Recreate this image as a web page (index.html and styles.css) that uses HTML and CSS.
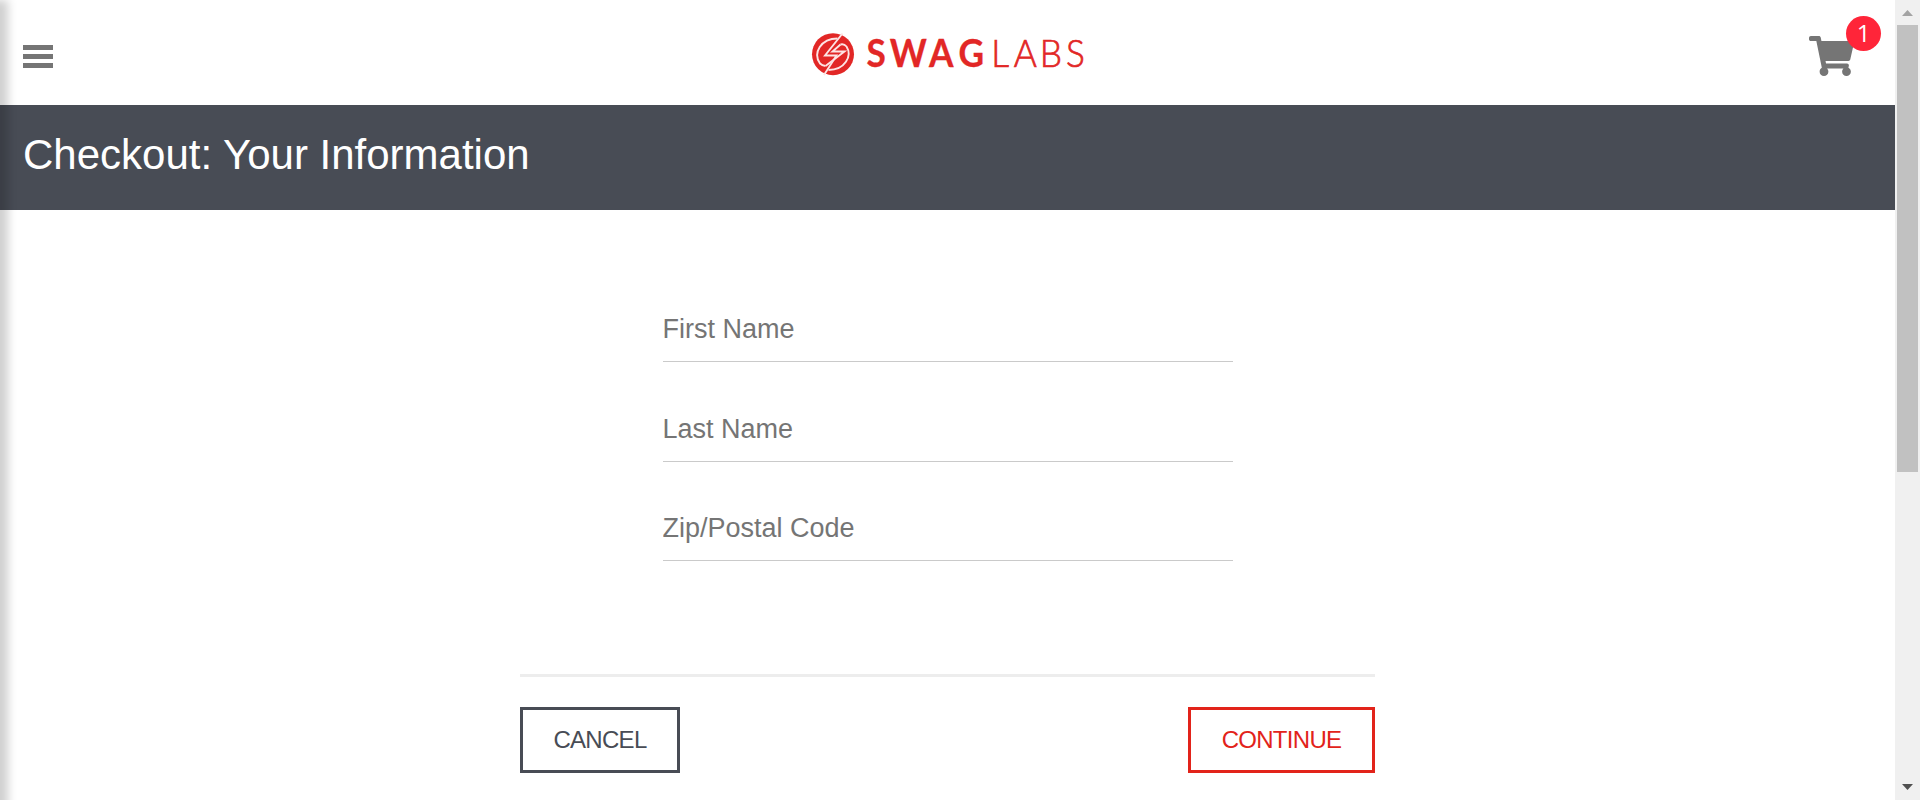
FILE: index.html
```html
<!DOCTYPE html>
<html lang="en">
<head>
<meta charset="utf-8">
<title>Swag Labs</title>
<link rel="stylesheet" href="styles.css">
</head>
<body>
<div class="viewport">
  <div class="page">
    <div class="menu-shadow"></div>
    <header class="header">
      <button class="menu" aria-label="Open Menu"><span></span><span></span><span></span></button>
      <svg class="logo" width="284" height="50" viewBox="0 0 284 50" role="img">
        <circle cx="25" cy="25.200" r="21" fill="#e22726"/>
        <g fill="none" stroke="#fde4e4" stroke-width="1.900">
          <path d="M34.500 4.500 L17 26.500 H28.500 L16 46"/>
          <path d="M32.500 15.500 L24.500 22.500 H36.500 L17.500 37"/>
          <path d="M29.500 9.500 C13 9.500 4.500 24 12 34.500 Q14 36.500 17.500 37"/>
          <path d="M32.500 15.500 Q36 14.500 38.500 17.500 C44.500 27 37 41 20.500 41"/>
        </g>
        <text class="logo-bold" transform="scale(.94 1)" x="72.500 106.700 141.700 173.700" y="38.500">SWAG</text>
        <text class="logo-light" transform="scale(.94 1)" x="204.500 231.300 258.500 284.600" y="38.500">LABS</text>
      </svg>
      <a class="cart">
        <svg width="45" height="40" viewBox="0 0 576 512" preserveAspectRatio="none"><path fill="#757575" d="M528.120 301.319l47.273-208C578.806 78.301 567.391 64 551.990 64H159.208l-9.166-44.810C147.758 8.021 137.930 0 126.529 0H24C10.745 0 0 10.745 0 24v16c0 13.255 10.745 24 24 24h69.883l70.248 343.435C147.325 417.100 136 435.222 136 456c0 30.928 25.072 56 56 56s56-25.072 56-56c0-15.674-6.447-29.835-16.824-40h209.647C430.447 426.165 424 440.326 424 456c0 30.928 25.072 56 56 56s56-25.072 56-56c0-22.172-12.888-41.332-31.579-50.405l5.517-24.276c3.413-15.018-8.002-29.319-23.403-29.319H218.117l-6.545-32h293.145c11.206 0 20.920-7.754 23.403-18.681z"/></svg>
        <span class="badge">1</span>
      </a>
    </header>
    <h1 class="title">Checkout: Your Information</h1>
    <form class="checkout">
      <div class="fields">
        <input class="field" type="text" placeholder="First Name">
        <input class="field" type="text" placeholder="Last Name">
        <input class="field" type="text" placeholder="Zip/Postal Code">
      </div>
      <div class="actions">
        <button class="btn cancel" type="button"><span>CANCEL</span></button>
        <button class="btn continue" type="button"><span>CONTINUE</span></button>
      </div>
    </form>
  </div>
  <div class="scrollbar">
    <svg width="11" height="6" viewBox="0 0 11 6"><path fill="#a3a3a3" d="M0 6L5.500 0L11 6z"/></svg>
    <div class="thumb"></div>
    <svg width="11" height="6" viewBox="0 0 11 6"><path fill="#505050" d="M0 0L5.500 6L11 0z"/></svg>
  </div>
</div>
</body>
</html>
```
FILE: styles.css
```css
* { box-sizing: border-box; }
body {
  margin: 0;
  overflow: hidden;
  background: #fff;
  font-family: "Liberation Sans", Arial, sans-serif;
}
.viewport { display: flex; height: 800px; overflow: hidden; }
.page { position: relative; flex: 1; overflow: hidden; }
.menu-shadow {
  position: absolute;
  left: -20px;
  top: 8px;
  width: 20px;
  height: 850px;
  box-shadow: 0 0 9px 8px rgba(0, 0, 0, 0.19);
}
.header {
  display: flex;
  justify-content: space-between;
  height: 105px;
  padding: 0 37px 0 23px;
}
.menu {
  display: flex;
  flex-direction: column;
  gap: 4px;
  width: 69px;
  padding: 45px 0 0;
  border: 0;
  background: none;
}
.menu span { width: 30px; height: 5px; background: #757575; }
.logo { margin-top: 29px; margin-right: 2px; }
.logo-bold {
  fill: #e22726;
  stroke: #e22726;
  stroke-width: 0.300px;
  font: 700 37.500px Lato, sans-serif;
  text-anchor: middle;
}
.logo-light {
  fill: #e22726;
  stroke: #e22726;
  stroke-width: 0.700px;
  font: 300 37.500px Lato, sans-serif;
  text-anchor: middle;
}
.cart { position: relative; width: 49px; padding-top: 36px; }
.badge {
  position: absolute;
  left: 37px;
  top: 16px;
  width: 35px;
  height: 35px;
  border-radius: 50%;
  background: #ff2539;
  color: #fff;
  font: 24px/34px "Open Sans", sans-serif;
  text-align: center;
}
.title {
  height: 105px;
  margin: 0;
  padding: 26px 23px;
  background: #484c55;
  color: #fff;
  font-size: 42px;
  font-weight: 400;
  line-height: 48px;
}
.checkout { width: 855px; margin: 0 auto; }
.fields {
  display: flex;
  flex-direction: column;
  width: 570px;
  margin: 0 auto;
  padding-top: 92px;
}
.field {
  width: 100%;
  height: 60px;
  margin-bottom: 40px;
  padding: 0 0 5px;
  border: 0;
  border-bottom: 1px solid #cacaca;
  background: none;
  font: 27px "Liberation Sans", Arial, sans-serif;
}
.field:nth-child(2) { margin-bottom: 39px; }
.field:last-child { margin-bottom: 0; }
.field::placeholder { color: #757575; opacity: 1; }
.actions {
  display: flex;
  justify-content: space-between;
  margin-top: 113px;
  padding-top: 30px;
  border-top: 3px solid #ededed;
}
.btn {
  height: 66px;
  padding: 0;
  border: 3px solid;
  background: #fff;
  font: 24px "Liberation Sans", Arial, sans-serif;
}
.cancel { width: 160px; color: #484c55; letter-spacing: -0.700px; }
.continue { width: 187px; color: #e2231a; letter-spacing: -0.700px; }
.scrollbar {
  display: flex;
  flex-direction: column;
  align-items: center;
  width: 25px;
  padding: 10px 2px 10px;
  background: #f0f0f0;
}
.thumb { width: 21px; height: 447px; margin: 9px 0 auto; background: #c1c1c1; }
```
